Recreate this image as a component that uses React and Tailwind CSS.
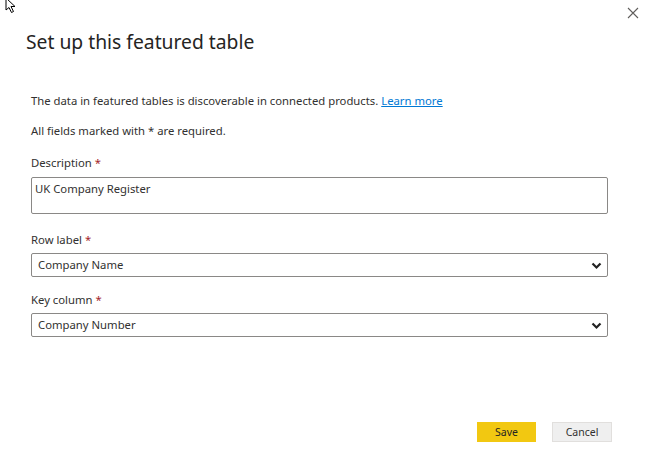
import React from "react";

const font = { fontFamily: '"Noto Sans", "Open Sans", Arial, sans-serif' };

function Chevron() {
  return (
    <svg width="11" height="8" viewBox="0 0 11 8" className="absolute right-[5px] top-[8px]">
      <path d="M1.5 1.5 L5.5 5.5 L9.5 1.5" fill="none" stroke="#222" strokeWidth="2.2" />
    </svg>
  );
}

function Label({ children }) {
  return (
    <div className="text-[11.3px] leading-[16px] text-[#323130]">
      {children} <span className="text-[#a4262c]">*</span>
    </div>
  );
}

function Select({ value }) {
  return (
    <div className="relative w-[577px] h-[24px] border border-[#8a8886] rounded-[2px] text-[11.3px] leading-[22px] text-[#323130] pl-[6px]">
      {value}
      <Chevron />
    </div>
  );
}

export default function App() {
  return (
    <div className="relative w-[646px] h-[450px] bg-white overflow-hidden" style={font}>
      <svg width="14" height="14" viewBox="0 0 14 14" className="absolute left-[5px] top-0">
        <path d="M1 -2 L1 10 L4 7.5 L6.5 12.5 L8.5 11.5 L6 6.5 L10 6.5 Z" fill="#fff" stroke="#000" strokeWidth="1" />
      </svg>
      <svg width="12" height="12" viewBox="0 0 12 12" className="absolute left-[627px] top-[7px]">
        <path d="M1 1 L11 11 M11 1 L1 11" stroke="#605e5c" strokeWidth="1.1" />
      </svg>

      <div className="pl-[26px] pt-[28px] text-[19.3px] leading-[28px] text-[#252423]">
        Set up this featured table
      </div>

      <div className="pl-[31px] flex flex-col">
        <div className="mt-[37px] text-[11.3px] leading-[16px] text-[#323130]">
          The data in featured tables is discoverable in connected products.{" "}
          <span className="text-[#0078d4] underline">Learn more</span>
        </div>
        <div className="mt-[14px] text-[11.3px] leading-[16px] text-[#323130]">
          All fields marked with * are required.
        </div>

        <div className="mt-[16px]">
          <Label>Description</Label>
        </div>
        <div className="mt-[6px] w-[577px] h-[37px] border border-[#8a8886] rounded-[2px] text-[11.3px] leading-[16px] text-[#323130] pl-[3px] pt-[3px]">
          UK Company Register
        </div>

        <div className="mt-[18px]">
          <Label>Row label</Label>
        </div>
        <div className="mt-[5px]">
          <Select value="Company Name" />
        </div>

        <div className="mt-[15px]">
          <Label>Key column</Label>
        </div>
        <div className="mt-[5px]">
          <Select value="Company Number" />
        </div>
      </div>

      <div className="absolute left-0 right-0 top-[422px] flex justify-end pr-[34px] gap-[16px]">
        <div className="w-[59px] h-[20px] bg-[#f2c811] text-[10.5px] leading-[20px] text-center text-[#252423]">
          Save
        </div>
        <div className="w-[60px] h-[20px] bg-[#efefef] border border-[#e1dfdd] text-[10.5px] leading-[18px] text-center text-[#323130]">
          Cancel
        </div>
      </div>
    </div>
  );
}
